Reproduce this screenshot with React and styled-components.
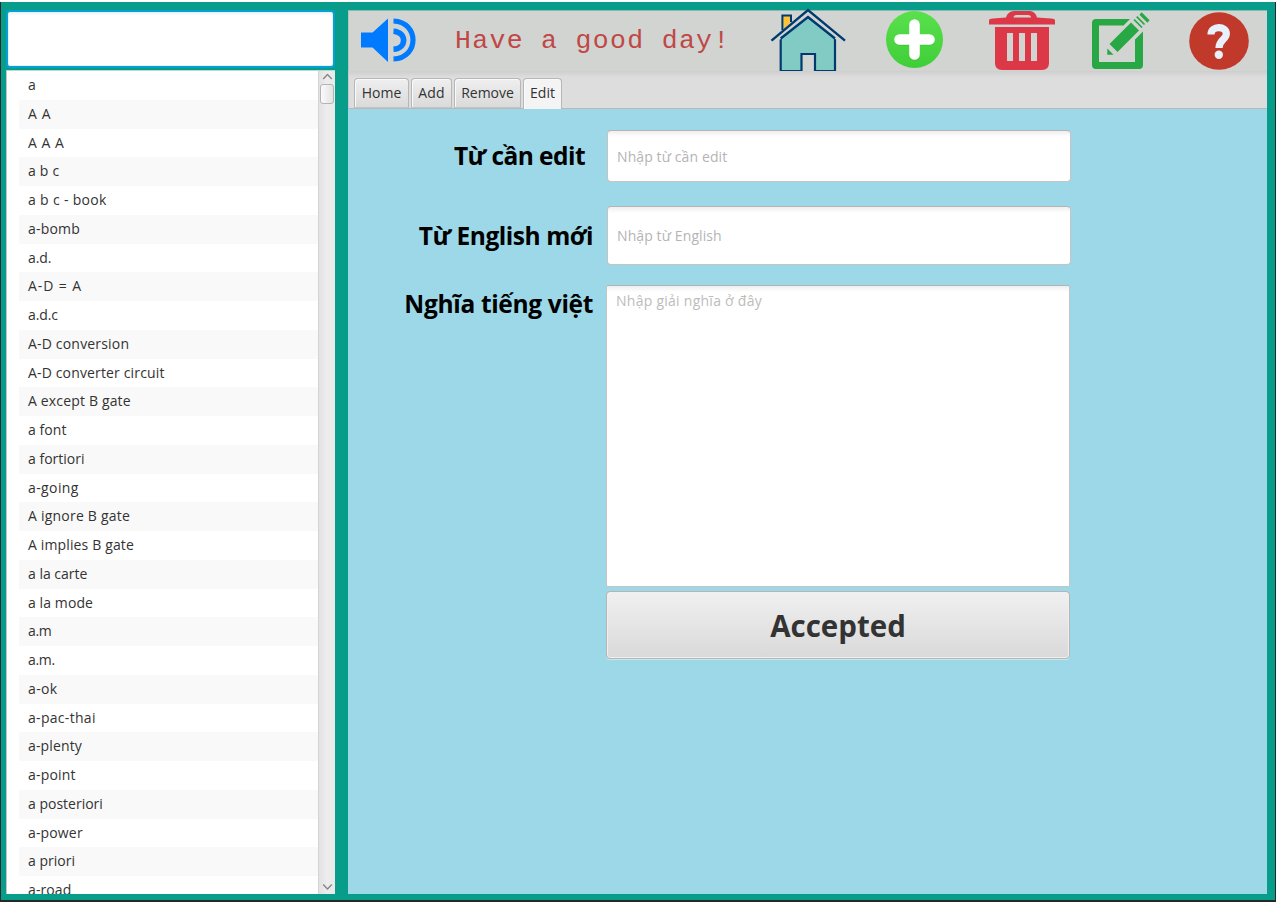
import React from "react";
import styled, { createGlobalStyle } from "styled-components";

const Global = createGlobalStyle`
  * { box-sizing: border-box; }
  body { margin: 0; overflow: hidden; background: #fff; }
`;

const sans = `"Open Sans", "Noto Sans", sans-serif`;

const Window = styled.div`
  width: 1276px;
  height: 902px;
  border-top: 2px solid #fff;
  background: #222926;
  padding: 0 1px 2px;
  font-family: ${sans};
  color: #333;
`;

const Frame = styled.div`
  display: flex;
  gap: 13px;
  height: 898px;
  padding: 8px 8px 6px 5px;
  background: #089d8a;
`;

const Sidebar = styled.aside`
  display: flex;
  flex-direction: column;
  gap: 2px;
  width: 329px;
`;

const Search = styled.input`
  width: 100%;
  height: 58px;
  flex: none;
  border: 2px solid #06a0d2;
  border-radius: 4px;
  outline: none;
  background: #fff;
  box-shadow: inset 0 0 0 1px #e2f3fa, inset 0 2px 3px #edf3f6;
  padding: 0 10px;
  font: 15px ${sans};
`;

const ListBox = styled.div`
  display: flex;
  height: 824px;
  border-top: 1px solid #b5d9d3;
  border-left: 1px solid #c4c4c4;
  background: #fff;
`;

const WordList = styled.ul`
  flex: 1;
  margin: 0;
  padding: 0 0 0 12px;
  list-style: none;
  overflow: hidden;
`;

const Word = styled.li`
  height: 28.76px;
  padding-left: 9px;
  line-height: 28.5px;
  font-size: 14px;
  letter-spacing: ${(p) => p.$spacing}px;
  white-space: pre;
  background: #fff;
  &:nth-child(even) { background: #f9f9f9; }
`;

const ScrollBar = styled.div`
  display: flex;
  flex-direction: column;
  justify-content: space-between;
  align-items: center;
  width: 17px;
  border-left: 1px solid #d4d4d4;
  background: linear-gradient(90deg, #e2e2e2, #ededed 50%, #e9e9e9);
`;

const ScrollTop = styled.div`
  display: flex;
  flex-direction: column;
  align-items: center;
`;

const Thumb = styled.div`
  width: 14px;
  height: 20px;
  border: 1px solid #b4b4b4;
  border-radius: 3px;
  background: linear-gradient(90deg, #fbfbfb, #e2e2e2);
`;

const Main = styled.main`
  display: flex;
  flex-direction: column;
  width: 919px;
  background: #9cd8e7;
`;

const Header = styled.header`
  display: flex;
  align-items: flex-start;
  height: 61px;
  border-top: 1px solid #83bbb1;
  border-left: 1px solid #b4c5c0;
  background: #d1d4d1;
`;

const Greeting = styled.div`
  width: 355px;
  height: 60px;
  flex: none;
  padding-left: 39px;
  font: 26.5px/60px "Courier New", "Liberation Mono", monospace;
  letter-spacing: 1.32px;
  color: #c04746;
  white-space: pre;
`;

const HeaderIcon = styled.svg`
  display: block;
  flex: none;
  margin-left: ${(p) => p.$left || 0}px;
  margin-top: ${(p) => p.$top || 0}px;
  overflow: visible;
`;

const TabBar = styled.nav`
  display: flex;
  align-items: flex-end;
  gap: 2px;
  height: 38px;
  padding-left: 5px;
  border-left: 1px solid #c8c8c8;
  border-bottom: 1px solid #b9b9b9;
  background: linear-gradient(#cecece, #dddddd 6px);
`;

const Tab = styled.button`
  width: ${(p) => p.$width}px;
  height: ${(p) => (p.$active ? 31 : 30)}px;
  flex: none;
  margin: 0 0 ${(p) => (p.$active ? -1 : 0)}px;
  padding: 0 0 ${(p) => (p.$active ? 3 : 1)}px;
  border: 1px solid #b7b7b7;
  border-bottom: ${(p) => (p.$active ? "0" : "1px solid #c4c4c4")};
  border-radius: 4px 4px 0 0;
  background: ${(p) => (p.$active ? "#f4f4f4" : "linear-gradient(#efefef, #dadada)")};
  box-shadow: inset 1px 1px 0 #fafafa;
  font: 14px ${sans};
  letter-spacing: ${(p) => p.$spacing}px;
  color: #333;
`;

const Form = styled.form`
  display: flex;
  flex-direction: column;
  padding: 21px 0 0 35px;
`;

const FormRow = styled.div`
  display: flex;
  align-items: flex-start;
  margin-bottom: ${(p) => p.$after}px;
`;

const Label = styled.label`
  width: ${(p) => p.$width}px;
  flex: none;
  margin-right: ${(p) => p.$gap}px;
  padding-top: ${(p) => p.$top}px;
  text-align: right;
  font: bold 24.5px/34px ${sans};
  letter-spacing: ${(p) => p.$spacing}px;
  white-space: nowrap;
  color: #000;
`;

const Field = styled.input`
  width: 464px;
  height: ${(p) => p.$height}px;
  padding: 0 9px;
  border: 1px solid #c4c4c4;
  border-top-color: #b4b4b4;
  border-radius: 4px;
  outline: none;
  background: linear-gradient(#eee, #fff 6px);
  font: 14px ${sans};
  letter-spacing: 0.1px;
  &::placeholder { color: #b4b4b4; opacity: 1; }
`;

const Area = styled.textarea`
  display: block;
  width: 464px;
  height: 302px;
  padding: 5px 9px;
  border: 1px solid #c4c4c4;
  border-top-color: #b4b4b4;
  border-radius: 2px;
  outline: none;
  resize: none;
  background: linear-gradient(#eee, #fff 6px);
  font: 14px/20px ${sans};
  letter-spacing: 0.26px;
  &::placeholder { color: #bcbcbc; opacity: 1; }
`;

const Accept = styled.button`
  width: 464px;
  height: 68px;
  margin: 0 0 0 223px;
  padding: 0;
  border: 1px solid #b5b5b5;
  border-radius: 4px;
  background: linear-gradient(#f0f0f0, #d9d9d9);
  box-shadow: inset 0 0 0 1px #f0f0f0, 0 1px 0 #cbe7ee;
  font: bold 29.5px ${sans};
  color: #333;
`;

const words = [
  ["a", 0], ["A A", 0.6], ["A A A", 0.5], ["a b c", 0.2], ["a b c - book", 0.32],
  ["a-bomb", 0.2], ["a.d.", -0.12], ["A-D = A", 0.9], ["a.d.c", -0.12],
  ["A-D conversion", 0.18], ["A-D converter circuit", 0.15], ["A except B gate", 0.16],
  ["a font", 0.05], ["a fortiori", 0], ["a-going", 0.4], ["A ignore B gate", 0.22],
  ["A implies B gate", 0.14], ["a la carte", 0], ["a la mode", 0.1], ["a.m", -0.3],
  ["a.m.", -0.3], ["a-ok", 0.35], ["a-pac-thai", 0.3], ["a-plenty", 0.15],
  ["a-point", 0.2], ["a posteriori", 0], ["a-power", 0.15], ["a priori", 0], ["a-road", 0.1],
];

const Speaker = () => (
  <HeaderIcon $left={12} $top={7} width="55" height="44" viewBox="0 0 55 44">
    <path d="M0 14.5H11.5L27 .5V44L11.5 29.5H0Z" fill="#007bff" />
    <path d="M32.5 13.2C46 14 46 30.5 32.5 31.2" fill="none" stroke="#007bff" strokeWidth="5.6" />
    <path d="M32.5 3C58.5 4 58.5 40 32.5 41" fill="none" stroke="#007bff" strokeWidth="5.2" />
  </HeaderIcon>
);

const House = () => (
  <HeaderIcon $top={-3} width="75" height="64" viewBox="0 0 75 64">
    <path d="M11.4 22V7.5H20V14" fill="#ffc234" stroke="#003b70" strokeWidth="2" />
    <path d="M9.7 63V30L36.8 9 64 30V63H44V46H30.5V63Z" fill="#82cbc5" stroke="#003b70" strokeWidth="2.2" />
    <path d="M3 33.5 37 5.5 71.5 33.5 64 31 37 9.5 10 31Z" fill="#d1d4d1" />
    <path d="M.5 32.7 37 2 74 32.7M9.7 30.5 37 9 64 30.5" fill="none" stroke="#003b70" strokeWidth="2.4" />
  </HeaderIcon>
);

const Plus = () => (
  <HeaderIcon $left={40} width="57" height="57" viewBox="0 0 57 57">
    <defs>
      <linearGradient id="plusFill" x2="0" y2="1">
        <stop stopColor="#5ae04d" />
        <stop offset="1" stopColor="#3fce39" />
      </linearGradient>
    </defs>
    <circle cx="28.5" cy="28.5" r="28.5" fill="url(#plusFill)" />
    <path d="M28.5 14V44.5M13.5 29.2H43.5" stroke="#32b82e" strokeWidth="11" strokeLinecap="round" opacity=".4" />
    <path d="M28.5 13.5V43.5M13.5 28.5H43.5" stroke="#fff" strokeWidth="10.6" strokeLinecap="round" />
  </HeaderIcon>
);

const Trash = () => (
  <HeaderIcon $left={46} width="66" height="59" viewBox="0 0 66 59">
    <path
      fillRule="evenodd"
      fill="#dc3848"
      d="M0 13.5V9.5Q0 7.5 4 7.5L17 6.5Q19 0 25 0H41Q46 0 48 6.5L62 7.5Q66 7.5 66 9.5V13.5ZM24.5 6.5H42Q42 4 39 4H27.5Q24.5 4 24.5 6.5Z"
    />
    <path
      fillRule="evenodd"
      fill="#dc3848"
      d="M6 16H60V52Q60 59 53 59H13Q6 59 6 52ZM18 22V50H24V22ZM30 22V50H36V22ZM42 22V50H48V22Z"
    />
  </HeaderIcon>
);

const Pencil = () => (
  <HeaderIcon $left={37} $top={1} width="58" height="58" viewBox="0 0 58 58">
    <path d="M38 7 31.5 13.5H7V50H43V27.5L51 19.5V53Q51 57 47 57H4Q0 57 0 53V11Q0 7 4 7Z" fill="#28a745" />
    <path d="M39 10.5 47 18.5 25.5 40 17.5 32ZM15.3 36.5 21.5 42.7H15.3Z" fill="#28a745" />
    <path d="M48.5 1.5 56.5 9.5" stroke="#28a745" strokeWidth="3.2" />
    <path d="M44.7 4.7 52.5 12.5M42 7.5 50 15.5" stroke="#28a745" strokeWidth="1.7" />
  </HeaderIcon>
);

const Help = () => (
  <HeaderIcon $left={39} $top={1} width="60" height="58" viewBox="0 0 60 58">
    <ellipse cx="30" cy="29" rx="29.8" ry="28.8" fill="#c1392b" />
    <path d="M22 22.5C22 13.5 37.5 13.5 37.3 22C37.2 27.5 30 27.5 30 36" fill="none" stroke="#e8f0fb" strokeWidth="7.2" />
    <circle cx="29.8" cy="42.7" r="4.2" fill="#e8f0fb" />
  </HeaderIcon>
);

const Chevron = ({ down }) => (
  <svg width="11" height="13" viewBox="0 0 11 13">
    <path d={down ? "M1.2 3.5 5.5 8 9.8 3.5" : "M1.2 8 5.5 3.5 9.8 8"} fill="none" stroke="#858585" strokeWidth="1.3" />
  </svg>
);

export default function App() {
  return (
    <Window>
      <Global />
      <Frame>
        <Sidebar>
          <Search aria-label="Search" />
          <ListBox>
            <WordList>
              {words.map(([word, spacing]) => (
                <Word key={word} $spacing={spacing}>{word}</Word>
              ))}
            </WordList>
            <ScrollBar>
              <ScrollTop>
                <Chevron />
                <Thumb />
              </ScrollTop>
              <Chevron down />
            </ScrollBar>
          </ListBox>
        </Sidebar>
        <Main>
          <Header>
            <Speaker />
            <Greeting>Have a good day!</Greeting>
            <House />
            <Plus />
            <Trash />
            <Pencil />
            <Help />
          </Header>
          <TabBar>
            <Tab $width={55} $spacing={0}>Home</Tab>
            <Tab $width={41} $spacing={0.2}>Add</Tab>
            <Tab $width={67} $spacing={0}>Remove</Tab>
            <Tab $width={39} $spacing={0} $active>Edit</Tab>
          </TabBar>
          <Form>
            <FormRow $after={24}>
              <Label $width={202} $gap={22} $top={9} $spacing={-0.55}>Từ cần edit</Label>
              <Field $height={52} placeholder="Nhập từ cần edit" />
            </FormRow>
            <FormRow $after={20}>
              <Label $width={210} $gap={14} $top={13} $spacing={-0.45}>Từ English mới</Label>
              <Field $height={59} placeholder="Nhập từ English" />
            </FormRow>
            <FormRow $after={4}>
              <Label $width={210} $gap={13} $top={2} $spacing={-0.33}>Nghĩa tiếng việt</Label>
              <Area placeholder="Nhập giải nghĩa ở đây" />
            </FormRow>
            <Accept type="button">Accepted</Accept>
          </Form>
        </Main>
      </Frame>
    </Window>
  );
}
